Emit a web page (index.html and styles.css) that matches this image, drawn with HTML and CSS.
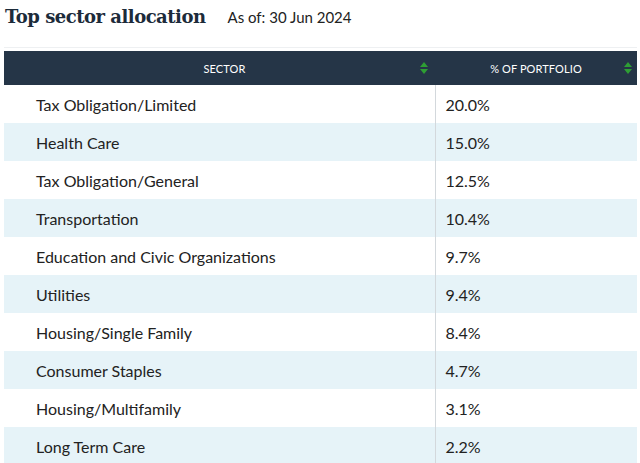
FILE: index.html
```html
<!DOCTYPE html>
<html>
<head>
<meta charset="utf-8">
<link rel="stylesheet" href="styles.css">
</head>
<body>
<div class="page">
  <div class="title-row">
    <h2 class="title">Top sector allocation</h2>
    <span class="asof">As of: 30 Jun 2024</span>
  </div>
  <div class="rule"></div>
  <table class="alloc">
    <thead>
      <tr>
        <th class="c1"><span class="hlabel">SECTOR</span><svg class="sort" width="8" height="12" viewBox="0 0 8 12"><path d="M4 0 L8 5 L0 5 Z M4 12 L8 7 L0 7 Z" fill="#2e9e34"/></svg></th>
        <th class="c2"><span class="hlabel">% OF PORTFOLIO</span><svg class="sort" width="8" height="12" viewBox="0 0 8 12"><path d="M4 0 L8 5 L0 5 Z M4 12 L8 7 L0 7 Z" fill="#2e9e34"/></svg></th>
      </tr>
    </thead>
    <tbody>
      <tr><td class="c1">Tax Obligation/Limited</td><td class="c2">20.0%</td></tr>
      <tr><td class="c1">Health Care</td><td class="c2">15.0%</td></tr>
      <tr><td class="c1">Tax Obligation/General</td><td class="c2">12.5%</td></tr>
      <tr><td class="c1">Transportation</td><td class="c2">10.4%</td></tr>
      <tr><td class="c1">Education and Civic Organizations</td><td class="c2">9.7%</td></tr>
      <tr><td class="c1">Utilities</td><td class="c2">9.4%</td></tr>
      <tr><td class="c1">Housing/Single Family</td><td class="c2">8.4%</td></tr>
      <tr><td class="c1">Consumer Staples</td><td class="c2">4.7%</td></tr>
      <tr><td class="c1">Housing/Multifamily</td><td class="c2">3.1%</td></tr>
      <tr><td class="c1">Long Term Care</td><td class="c2">2.2%</td></tr>
    </tbody>
  </table>
</div>
</body>
</html>
```
FILE: styles.css
```css
html, body {
  margin: 0;
  padding: 0;
  background: #ffffff;
  overflow: hidden;
}
.page {
  width: 640px;
  padding-left: 4px;
  box-sizing: border-box;
}
.title-row {
  display: flex;
  align-items: baseline;
  gap: 22px;
  height: 38px;
  padding-left: 1px;
  padding-top: 6px;
  box-sizing: border-box;
}
.title {
  margin: 0;
  font-family: "DejaVu Serif", Georgia, serif;
  font-weight: bold;
  font-size: 18px;
  color: #1c2b3a;
  letter-spacing: -0.5px;
}
.asof {
  font-family: "Lato", "Open Sans", sans-serif;
  font-size: 15px;
  color: #222;
}
.rule {
  height: 1px;
  background: #eef0f2;
  margin-top: 9px;
  margin-right: 3px;
}
.alloc {
  border-collapse: collapse;
  width: 633px;
  margin-top: 3px;
  font-family: "Lato", "Open Sans", sans-serif;
  table-layout: fixed;
}
.alloc thead th {
  background: #253547;
  color: #ffffff;
  font-weight: normal;
  font-size: 11px;
  height: 34px;
  padding: 0;
  position: relative;
  text-align: center;
}
.alloc th.c1 { width: 431px; }
.hlabel { letter-spacing: 0.1px; }
.alloc th.c1 .hlabel { margin-left: 10px; }
.sort {
  position: absolute;
  top: 11px;
}
.alloc th.c1 .sort { left: 416px; }
.alloc th.c2 .sort { right: 5px; }
.alloc tbody td {
  height: 38px;
  padding: 0;
  font-size: 16px;
  color: #222;
  box-sizing: border-box;
}
.alloc tbody td.c1 { padding-left: 32px; }
.alloc tbody td.c2 {
  padding-left: 10px;
  border-left: 1px solid #d3d8dc;
}
.alloc tbody tr:nth-child(even) td { background: #e6f3f8; }
```
